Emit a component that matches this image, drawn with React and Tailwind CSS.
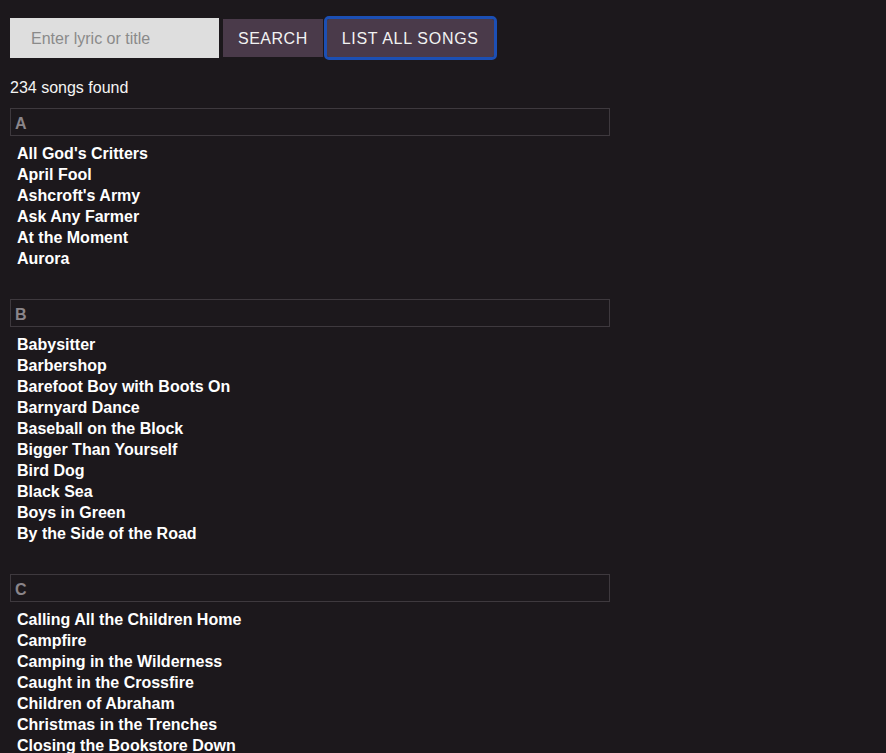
import React, { useState } from 'react';

const sections = [
  {
    letter: 'A',
    songs: ["All God's Critters", 'April Fool', "Ashcroft's Army", 'Ask Any Farmer', 'At the Moment', 'Aurora'],
  },
  {
    letter: 'B',
    songs: [
      'Babysitter',
      'Barbershop',
      'Barefoot Boy with Boots On',
      'Barnyard Dance',
      'Baseball on the Block',
      'Bigger Than Yourself',
      'Bird Dog',
      'Black Sea',
      'Boys in Green',
      'By the Side of the Road',
    ],
  },
  {
    letter: 'C',
    songs: [
      'Calling All the Children Home',
      'Campfire',
      'Camping in the Wilderness',
      'Caught in the Crossfire',
      'Children of Abraham',
      'Christmas in the Trenches',
      'Closing the Bookstore Down',
      'Coming Home',
      'Cowboy Song',
    ],
  },
];

const App = () => {
  const [query, setQuery] = useState('');

  return (
    <div className="min-h-screen bg-[#1c181c] text-white font-['Liberation_Sans',Arial,sans-serif] px-[10px] pt-[18px]">
      {/* Search bar */}
      <div className="flex items-center gap-[4px]">
        <input
          value={query}
          onChange={(e) => setQuery(e.target.value)}
          placeholder="Enter lyric or title"
          className="w-[209px] h-[40px] pt-[1px] bg-[#dedede] text-black text-[16px] pl-[21px] outline-none placeholder:text-[#8a8a8a]"
        />
        <button className="h-[38px] px-[15px] pt-[2px] bg-[#4a3a4a] text-[16px] tracking-[0.5px] text-[#f2f2f2]">
          SEARCH
        </button>
        <button className="h-[38px] px-[15px] pt-[2px] bg-[#4a3a4a] text-[16px] tracking-[0.7px] text-[#f2f2f2] rounded-[2px] outline outline-[3px] outline-[#1c4fb4]">
          LIST ALL SONGS
        </button>
      </div>

      <p className="mt-[18px] text-[16px] leading-[24px] text-[#f4f4f4]">234 songs found</p>

      {/* Songs grouped by letter */}
      <div className="mt-[8px]">
        {sections.map((section) => (
          <div key={section.letter} className="mb-[30px]">
            <div className="w-[600px] h-[28px] border border-[#3e393e] flex items-center pl-[4px] pt-[3px]">
              <span className="text-[16px] font-bold text-[#8a858a]">{section.letter}</span>
            </div>
            <ul className="mt-[7px] pl-[7px]">
              {section.songs.map((song) => (
                <li key={song} className="text-[16px] leading-[21px] font-bold text-white">
                  {song}
                </li>
              ))}
            </ul>
          </div>
        ))}
      </div>
    </div>
  );
};

export default App;
